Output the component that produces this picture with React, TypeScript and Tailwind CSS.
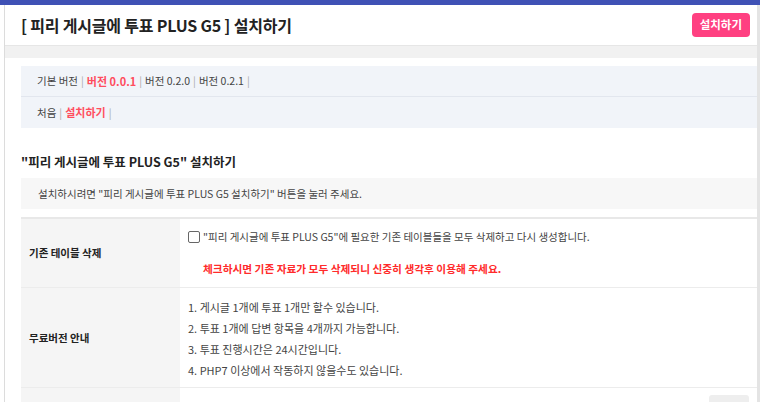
import React from 'react'

const font = { fontFamily: '"Noto Sans CJK KR", "Noto Sans", sans-serif' }

const versions = [
  { label: '버전 0.0.1', active: true },
  { label: '버전 0.2.0', active: false },
  { label: '버전 0.2.1', active: false },
]

const notices = [
  '1. 게시글 1개에 투표 1개만 할수 있습니다.',
  '2. 투표 1개에 답변 항목을 4개까지 가능합니다.',
  '3. 투표 진행시간은 24시간입니다.',
  '4. PHP7 이상에서 작동하지 않을수도 있습니다.',
]

export default function App() {
  return (
    <div className="w-[760px] h-[402px] overflow-hidden bg-white text-[#333]" style={font}>
      <div className="h-[5px] bg-[#3f51b5]" />
      <div className="flex h-[397px] overflow-hidden">
        <div className="w-[4px] bg-white" />
        <div className="w-px bg-[#dcdcdc]" />
        <div className="flex-1 flex flex-col">
          {/* header */}
          <div className="h-[40px] shrink-0 flex items-center justify-between pl-[16px] pr-[7px]">
            <h1 className="text-[16px] font-bold text-[#222] tracking-[-0.2px]">
              [ 피리 게시글에 투표 PLUS G5 ] 설치하기
            </h1>
            <button className="h-[24px] px-[8px] rounded-[4px] bg-[#ff4081] text-white text-[11.5px] font-bold">
              설치하기
            </button>
          </div>
          <div className="h-[13px] shrink-0 bg-[#f1f1f1] border-t border-[#e6e6e6]" />

          <div className="pl-[16px] pt-[8px] flex flex-col shrink-0">
            {/* version nav */}
            <div className="bg-[#f1f4f9] text-[10.5px] text-[#444]">
              <div className="h-[31px] flex items-center pl-[16px] border-b border-[#e2e6ee]">
                <span>기본 버전</span>
                <span className="mx-[3px] text-[#aaa]">|</span>
                {versions.map(v => (
                  <React.Fragment key={v.label}>
                    <span className={v.active ? 'text-[#ff4d5e] font-bold text-[11px]' : ''}>{v.label}</span>
                    <span className="mx-[3px] text-[#aaa]">|</span>
                  </React.Fragment>
                ))}
              </div>
              <div className="h-[31px] flex items-center pl-[16px]">
                <span>처음</span>
                <span className="mx-[3px] text-[#aaa]">|</span>
                <span className="text-[#ff4d5e] font-bold text-[11px]">설치하기</span>
                <span className="mx-[3px] text-[#aaa]">|</span>
              </div>
            </div>

            <h2 className="mt-[24px] text-[12.5px] font-bold text-[#222] h-[20px] leading-[20px]">
              "피리 게시글에 투표 PLUS G5" 설치하기
            </h2>
            <div className="mt-[6px] h-[31px] flex items-center pl-[17px] bg-[#f7f7f7] text-[10.5px] text-[#444]">
              설치하시려면 "피리 게시글에 투표 PLUS G5 설치하기" 버튼을 눌러 주세요.
            </div>

            {/* options table */}
            <div className="mt-[8px] border-t-2 border-[#e8e8e8] text-[11px]">
              <div className="flex h-[69px] border-b border-[#ececec]">
                <div className="w-[159px] shrink-0 bg-[#f5f5f5] flex items-center pl-[8px] font-bold text-[10.5px] text-[#222]">
                  기존 테이블 삭제
                </div>
                <div className="flex-1 pl-[8px] pt-[10px] text-[#444] text-[10.5px]">
                  <label className="flex items-center gap-[3px]">
                    <span className="w-[12px] h-[12px] border border-[#666] rounded-[2px] bg-white" />
                    "피리 게시글에 투표 PLUS G5"에 필요한 기존 테이블들을 모두 삭제하고 다시 생성합니다.
                  </label>
                  <p className="mt-[16px] pl-[15px] text-[#ff2b2b] font-bold text-[10.7px]">
                    체크하시면 기존 자료가 모두 삭제되니 신중히 생각후 이용해 주세요.
                  </p>
                </div>
              </div>
              <div className="flex h-[100px] border-b border-[#ececec]">
                <div className="w-[159px] shrink-0 bg-[#f5f5f5] flex items-center pl-[8px] font-bold text-[10.5px] text-[#222]">
                  무료버전 안내
                </div>
                <div className="flex-1 pl-[8px] pt-[11px] flex flex-col gap-[4px] text-[#444]">
                  {notices.map(n => (
                    <p key={n} className="h-[17px] leading-[17px]">{n}</p>
                  ))}
                </div>
              </div>
              <div className="flex h-[20px]">
                <div className="w-[159px] shrink-0 bg-[#f5f5f5]" />
                <div className="flex-1 flex justify-end pr-[8px] pt-[7px]">
                  <div className="w-[40px] h-[10px] bg-[#eeeeee] rounded-t-[3px]" />
                </div>
              </div>
            </div>
          </div>
        </div>
        <div className="w-[3px] bg-[#e4e4e4]" />
      </div>
    </div>
  )
}
